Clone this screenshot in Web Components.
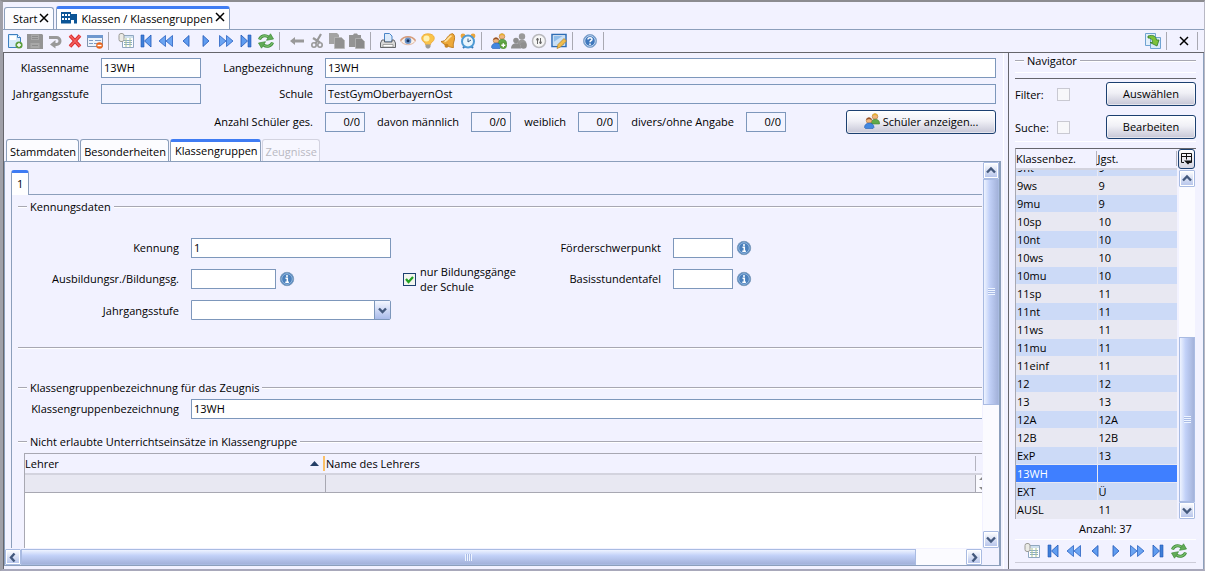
<!DOCTYPE html>
<html lang="de">
<head>
<meta charset="utf-8">
<title>Klassen / Klassengruppen</title>
<style>
html, body { height: 100%; }
body { margin: 0; font: 11px/15px "Open Sans", "Noto Sans", sans-serif; color: #000; background: #f2f2ff;
  --bg: #f2f2ff; --line: #8c9fbb; --field: #7d97bb; --blue: #3f7cf3; --dark: #66666c; }
</style>
</head>
<body>
<app-window></app-window>

<script>
const ICONS = {
  new: `<path d="M1.5 1.5h9l3 3v10h-12z" fill="#d8ebfa" stroke="#3d7fc0"/><path d="M3 3h6v4H3z" fill="#fff"/><path d="M10.5 1.5v3h3" fill="#fff" stroke="#3d7fc0"/><circle cx="12" cy="12" r="3.6" fill="#5c9e3e"/><path d="M12 10v4M10 12h4" stroke="#fff" stroke-width="1.4"/>`,
  save: `<path d="M0 1h15l1 1v14H0z" fill="#949494"/><path d="M4 1.5h8V7H4zM3.500 10h9v5h-9z" fill="#a8a8a8"/><path d="M5 3.500h6M5 5.500h6M5 12.500h6" stroke="#8c8c8c"/>`,
  undo: `<path d="M2 4.500h7.500a3.500 3.500 0 0 1 0 7H7" fill="none" stroke="#999" stroke-width="3"/><path d="M8.500 7v8.500L3 11.500z" fill="#999"/>`,
  delete: `<path d="M3 2.500l10 11M13 2.500L3 13.500" stroke="#d8262a" stroke-width="3.400"/><path d="M3 2.500l10 11M13 2.500L3 13.500" stroke="#f4605c" stroke-width="1.800"/>`,
  form: `<path d="M.5 2.500h15v11H.5z" fill="#eef4fb" stroke="#7f93ad"/><path d="M0 2h16v3H0z" fill="#6f98cf"/><path d="M2 7.500h4M8 7.500h6M2 10.500h4M7 10.500h4" stroke="#7f9cc4"/><circle cx="12.500" cy="12.500" r="3.300" fill="#e8641c"/><path d="M10.500 12.500h4" stroke="#fff" stroke-width="1.500"/>`,
  list: `<path d="M4.500 2.500h11v12h-11z" fill="#fff" stroke="#8fa7c0"/><path d="M5 3h10v2H5z" fill="#cfe0ee"/><path d="M6 7.500h8M6 9.500h8M6 11.500h8" stroke="#89abc9"/><path d="M8 5v9M12 5v9" stroke="#a9c48f"/><rect x="1" y=".5" width="5" height="8" rx="2" fill="#ebebe6" stroke="#9b9b96"/>`,
  first: `<path d="M3 2h3v12H3z" fill="#3f7fd8" stroke="#1f55b5" stroke-width=".6"/><path d="M13 2v12L6.500 8z" fill="#5f9cf0" stroke="#1f55b5" stroke-width=".8"/>`,
  rew: `<path d="M7.500 2.500v11L1 8zM14.500 2.500v11L8 8z" fill="#6ba4f2" stroke="#2a62c2" stroke-width=".8"/>`,
  prev: `<path d="M11 2.500v11L5 8z" fill="#5f9cf0" stroke="#1f55b5" stroke-width=".8"/>`,
  next: `<path d="M5 2.500v11l6-5.500z" fill="#5f9cf0" stroke="#1f55b5" stroke-width=".8"/>`,
  fwd: `<path d="M1.500 2.500v11L8 8zM8.500 2.500v11L15 8z" fill="#6ba4f2" stroke="#2a62c2" stroke-width=".8"/>`,
  last: `<path d="M10 2h3v12h-3z" fill="#3f7fd8" stroke="#1f55b5" stroke-width=".6"/><path d="M3 2v12l6.500-6z" fill="#5f9cf0" stroke="#1f55b5" stroke-width=".8"/>`,
  refresh: `<path d="M1.500 6.500C2.500 3 7 1.500 10.500 4" fill="none" stroke="#3d8c38" stroke-width="3"/><path d="M1.500 6.500C2.500 3 7 1.500 10.500 4" fill="none" stroke="#79bd6c" stroke-width="1.400"/><path d="M12.500.8L15.500 6l-7 1.300z" fill="#62ac57" stroke="#3d8c38" stroke-width=".7"/><path d="M14.500 9.500C13.500 13 9 14.500 5.500 12" fill="none" stroke="#3d8c38" stroke-width="3"/><path d="M14.500 9.500C13.500 13 9 14.500 5.500 12" fill="none" stroke="#79bd6c" stroke-width="1.400"/><path d="M3.500 15.200L.5 10l7-1.300z" fill="#62ac57" stroke="#3d8c38" stroke-width=".7"/>`,
  back: `<path d="M1 8l5-4v2.500h9v3H6V12z" fill="#999"/>`,
  cut: `<path d="M12 1L6.500 10.500M4 5l7 4.500" stroke="#999" stroke-width="2.200"/><circle cx="5" cy="12" r="2.200" fill="none" stroke="#999" stroke-width="1.600"/><circle cx="11" cy="12" r="2.200" fill="none" stroke="#999" stroke-width="1.600"/>`,
  copy: `<path d="M0 0h8l2 2v9H0z" fill="#a3a3a3"/><path d="M5.500 4.500h7l3 3v8h-10z" fill="#919191" stroke="#b8b8b8" stroke-width=".8"/>`,
  paste: `<path d="M0 2h4l1-1.500h3L9 2h3v12H0z" fill="#949494"/><path d="M6.500 5.500h6l3 3v7h-9z" fill="#8a8a8a" stroke="#b5b5b5" stroke-width=".8"/>`,
  print: `<path d="M4.500.5h5l2.500 2.500v6H4.500z" fill="#dceafa" stroke="#4a85c8"/><path d="M2 7h2.500v2H12V7h2l1.500 3v4.500H.5V10z" fill="#d9d9d9" stroke="#55585e" stroke-width=".9"/><path d="M3 11.500h10v2.500H3z" fill="#fff" stroke="#777" stroke-width=".6"/>`,
  eye: `<path d="M.5 8C4 2.500 12 2.500 15.500 8 12 13 4 13 .5 8z" fill="#f9f0ea" stroke="#dba98e" stroke-width=".8"/><path d="M.5 7.500C4 2.500 12 2.500 15.500 7.500" fill="none" stroke="#d69c7c" stroke-width="1.500"/><circle cx="8" cy="7.800" r="3.300" fill="#6a92c8"/><circle cx="8" cy="7.800" r="1.500" fill="#17325e"/>`,
  bulb: `<path d="M8 .8c7.500 0 8 6.500 3 9l-.5 2h-5l-.5-2C0 7.300.500.8 8 .8z" fill="#f9c34a" stroke="#eca732" stroke-width=".8"/><circle cx="6.500" cy="5.500" r="3" fill="#fff2b4"/><path d="M5.500 11.500h5V14L9 15.500H7L5.500 14z" fill="#9b9b98"/>`,
  bell: `<path d="M13 .8C15 2 15 6 13.500 10c-.4 1.300-.3 2.500 0 4.500C9.500 14.500 4.500 12 1 8.500 4 8.300 5 7.500 6.500 5.500 8.500 2.500 11 .3 13 .8z" fill="#eda93a" stroke="#b9761a" stroke-width=".9"/><path d="M11.500 2.800C8.500 4 7.500 8 4.500 8.800" fill="none" stroke="#ffe3a0" stroke-width="1.700"/><circle cx="6.500" cy="12.700" r="2" fill="#c98422"/>`,
  alarm: `<circle cx="3" cy="3" r="2.400" fill="#e9a43c"/><circle cx="13" cy="3" r="2.400" fill="#e9a43c"/><path d="M3 15l2-2M13 15l-2-2" stroke="#3576b4" stroke-width="2"/><circle cx="8" cy="8.500" r="6" fill="#e9f5fd" stroke="#4f9ad4" stroke-width="2"/><path d="M8 5.500v3.500l3-2" fill="none" stroke="#355c84"/>`,
  users: `<circle cx="11" cy="3.500" r="2.800" fill="#f0b57b" stroke="#ad7135" stroke-width=".6"/><path d="M8.200 3C8.500-.5 13.500-.5 13.800 3L11 2z" fill="#e4b02c"/><path d="M7 10c0-5 8.500-5 8.500 0v1H7z" fill="#60aa4a" stroke="#3f7f31" stroke-width=".6"/><circle cx="5" cy="7.500" r="2.800" fill="#f0b57b" stroke="#ad7135" stroke-width=".6"/><path d="M2.200 7C2.500 3.500 7.500 3.500 7.800 7L5 6z" fill="#94502a"/><path d="M.5 14.500c0-6 9.500-6 9.500 0l-1 1H1.500z" fill="#4388e0" stroke="#245eb0" stroke-width=".6"/>`,
  usersoff: `<circle cx="11" cy="3.500" r="3.200" fill="#999"/><path d="M6.500 11c0-6 9-6 9 0v1h-9z" fill="#999"/><circle cx="5" cy="7.500" r="2.800" fill="#8f8f8f"/><path d="M0 15.500c0-7 10-7 10 0z" fill="#8f8f8f"/><circle cx="12.500" cy="12.500" r="3.300" fill="#8f8f8f"/>`,
  toggle: `<circle cx="8" cy="8" r="6.500" fill="#f6f6f6" stroke="#b9b9bd" stroke-width="1.500"/><path d="M6.500 5v6M9.500 5v6" stroke="#666"/><circle cx="6.500" cy="6.500" r="1.200" fill="#666"/><circle cx="9.500" cy="9.500" r="1.200" fill="#666"/>`,
  edit: `<path d="M1 1.500h14v12H1z" fill="#fff" stroke="#2d6cb5" stroke-width="1.500"/><path d="M2.500 3h11v9h-11z" fill="#8fbdea"/><path d="M2.500 9l9-6h2v5l-5 4h-6z" fill="#c9e0f5"/><path d="M6 15.500l1-4L13 5.500l2.500 2.500L9.500 14z" fill="#f1bd4c" stroke="#b17f22" stroke-width=".7"/>`,
  help: `<circle cx="8" cy="8" r="6.500" fill="#3f78bd" stroke="#8ba9cd"/><circle cx="8" cy="8" r="5.300" fill="none" stroke="#dbe8f7" stroke-width=".9"/><path d="M6 6.500C6 4 10.200 4.200 10 6.500c-.1 1.200-2 1.300-2 2.700M8 10.500V12" fill="none" stroke="#fff" stroke-width="1.500"/>`,
  info: `<circle cx="8" cy="8" r="6.700" fill="#4a80bc" stroke="#7f9dbd"/><circle cx="8" cy="8" r="5.300" fill="none" stroke="#a9c6e4" stroke-width=".8"/><path d="M8 4v2M6.500 7.300H8.300V11M6.300 11.300h3.600" fill="none" stroke="#fff" stroke-width="1.500"/>`,
  export: `<path d="M.5 .5h10v12H.5z" fill="#e3effa" stroke="#6fa3d2"/><path d="M5.500 4.500h10v11h-10z" fill="#d7e8f8" stroke="#6fa3d2"/><path d="M3 3c5-1.500 8 0 8.500 4H14l-2 6-7-3.500h2.500C7.500 6 6 5 3 5z" fill="#7cc13a" stroke="#2f7a2a" stroke-width=".8"/>`,
  close: `<path d="M4 4l8 8M12 4l-8 8" stroke="#000" stroke-width="1.500"/>`,
  school: `<path d="M0 2h10v2h6v9.500h-3V10h-3v3.500H0z" fill="#0c5596"/><path d="M1 4h2v2H1zM4 4h2v2H4zM7 4h2v2H7zM1 8h2v2H1zM4 8h2v2H4zM7 8h2v2H7z" fill="#fff"/>`,
  columns: `<path d="M2.500 2.500h10v9h-4M2.500 2.500v9H5M2.500 5.500h10M7.500 2.500v6" fill="none" stroke="#111"/><path d="M5 9.500h8l-4 4z" fill="#111"/>`
};
ICONS.usersadd = ICONS.users + `<circle cx="12.300" cy="12.300" r="3.600" fill="#5c9e3e"/><path d="M12.300 10.300v4M10.300 12.300h4" stroke="#fff" stroke-width="1.400"/>`;

class UiElement extends HTMLElement {
  connectedCallback() {
    if (this.shadowRoot) return;
    this.attachShadow({ mode: 'open' }).innerHTML =
      `<style>*,:host{box-sizing:border-box}:host{display:block}:host,button,input,select{font:inherit}${this.styles()}</style>${this.markup()}`;
  }
  attr(name, fallback = '') { return this.getAttribute(name) ?? fallback; }
  styles() { return ''; }
  markup() { return '<slot></slot>'; }
}
const define = (name, cls) => customElements.define(name, cls);

define('ui-icon', class extends UiElement {
  styles() { return ':host{display:block;width:16px;height:16px;flex:none}svg{display:block;width:100%;height:100%}'; }
  markup() { return `<svg viewBox="0 0 16 16" aria-hidden="true">${ICONS[this.attr('name')]}</svg>`; }
});

define('tool-button', class extends UiElement {
  styles() { return 'button{display:flex;align-items:center;justify-content:center;width:20px;height:20px;padding:0;border:0;background:none}'; }
  markup() { return `<button type="button" aria-label="${this.attr('label')}"><ui-icon name="${this.attr('icon')}"></ui-icon></button>`; }
});

define('tool-divider', class extends UiElement {
  styles() { return ':host{width:1px;height:18px;margin:0 7px 0 3px;background:#a9a9b2;flex:none}'; }
  markup() { return ''; }
});

const btn = (icon, label) => `<tool-button icon="${icon}" label="${label}"></tool-button>`;
const DIV = '<tool-divider></tool-divider>';
const NAV = [['list', 'Liste'], ['first', 'Erster'], ['rew', 'Seite zurück'], ['prev', 'Zurück'], ['next', 'Weiter'], ['fwd', 'Seite vor'], ['last', 'Letzter'], ['refresh', 'Aktualisieren']];

define('tool-bar', class extends UiElement {
  styles() { return ':host{display:flex;align-items:center;height:24px;padding-left:2px;border-top:1px solid var(--line);border-bottom:1px solid var(--dark)}.end{margin-left:auto;display:flex;align-items:center}.end tool-divider:last-child{margin-right:6px}'; }
  markup() {
    return [
      btn('new', 'Neu') + btn('save', 'Speichern') + btn('undo', 'Rückgängig') + btn('delete', 'Löschen') + btn('form', 'Maske leeren'),
      NAV.map(n => btn(...n)).join(''),
      btn('back', 'Zurück') + btn('cut', 'Ausschneiden') + btn('copy', 'Kopieren') + btn('paste', 'Einfügen'),
      btn('print', 'Drucken') + btn('eye', 'Vorschau') + btn('bulb', 'Hinweise') + btn('bell', 'Erinnerung') + btn('alarm', 'Wiedervorlage'),
      btn('usersadd', 'Schüler hinzufügen') + btn('usersoff', 'Schüler entfernen') + btn('toggle', 'Umschalten') + btn('edit', 'Bearbeiten'),
      btn('help', 'Hilfe'), ''
    ].join(DIV) + `<div class="end">${btn('export', 'Export')}${DIV}${btn('close', 'Schließen')}${DIV}</div>`;
  }
});

define('doc-tab', class extends UiElement {
  styles() { return `
    :host{display:flex;align-items:center;height:22px;padding:0 2px 0 8px;background:#fcfcff;border:1px solid var(--line);border-bottom:0;border-radius:3px 3px 0 0}
    :host([active]){height:24px;margin-bottom:-1px;padding-left:4px;padding-bottom:3px;border-top:3px solid var(--blue);background:#fff}
    button{padding:0;border:0;background:none;display:flex;align-items:center;gap:4px;line-height:15px}
    .x{width:14px;padding-bottom:2px}.x ui-icon{margin:0 -1px}`; }
  markup() { return `<button type="button" role="tab">${this.hasAttribute('icon') ? `<ui-icon name="${this.attr('icon')}"></ui-icon>` : ''}<slot></slot></button><button type="button" class="x" aria-label="Schließen"><ui-icon name="close"></ui-icon></button>`; }
});

define('page-tab', class extends UiElement {
  styles() { return `
    button{display:block;height:22px;padding:1px 2px 0 3px;border:1px solid var(--line);border-bottom:0;border-radius:3px 3px 0 0;background:#fcfcff;color:#000}
    :host([active]) button{height:23px;padding:0 2px 3px 4px;border-top:3px solid var(--blue);background:#fff}
    :host([active]){margin-bottom:-1px}
    :host([disabled]) button{border-color:#d3d3e0;color:#b9b9c2;background:#f7f7ff}
    :host([tall]) button{height:25px;padding:0 5px 2px}`; }
  markup() { return `<button type="button" role="tab"${this.hasAttribute('disabled') ? ' disabled' : ''}><slot></slot></button>`; }
});

define('text-field', class extends UiElement {
  styles() { return `
    :host{display:flex;align-items:center;gap:12px;height:20px}
    label{width:var(--label,84px);padding-bottom:2px;text-align:right;white-space:nowrap;flex:none}
    input{width:var(--input,auto);flex:none;min-width:0;height:20px;padding:0 2px 1px;border:1px solid var(--field);background:#fff;color:#000}
    :host([wide]) input{flex:1 1 0;width:0}
    :host([readonly]) input{background:#f3f4ff}
    :host([count]) input{text-align:right;padding-right:4px}
    ui-icon{margin-left:-9px}`; }
  markup() { return `<label for="f">${this.attr('label')}</label><input id="f" type="text" value="${this.attr('value')}"${this.hasAttribute('readonly') ? ' readonly' : ''}>${this.hasAttribute('info') ? '<ui-icon name="info"></ui-icon>' : ''}`; }
});

define('drop-down', class extends UiElement {
  styles() { return `
    :host{display:flex;align-items:center;gap:12px;height:20px}
    label{width:var(--label);text-align:right;flex:none}
    .box{position:relative;width:200px}
    select{display:block;width:100%;height:20px;appearance:none;border:1px solid var(--field);border-radius:0 2px 2px 0;background:#fff;padding:0 18px 0 2px}
    svg{position:absolute;right:1px;top:1px;width:16px;height:18px;border-left:1px solid var(--field);background:linear-gradient(#f4f7ff,#a9bbea);pointer-events:none}`; }
  markup() { return `<label for="s">${this.attr('label')}</label><div class="box"><select id="s"><option></option></select><svg viewBox="0 0 14 18" aria-hidden="true"><path d="M3.500 7.500L7 11l3.500-3.500" fill="none" stroke="#44597d" stroke-width="2.400"/></svg></div>`; }
});

define('check-box', class extends UiElement {
  styles() { return `
    label{display:flex;align-items:center;gap:4px;line-height:15px}
    :host([before]) label{justify-content:space-between;width:55px;gap:0}
    input{appearance:none;width:13px;height:13px;margin:0;border:1px solid #c9c9d2;background:#f7f7fa;flex:none}
    :host([checked]) input{border-color:#1c4070;background:#f2f5ee url("data:image/svg+xml,%3Csvg xmlns='http://www.w3.org/2000/svg' viewBox='0 0 11 11'%3E%3Cpath d='M2 5l2.500 3L9 3' fill='none' stroke='%2321a121' stroke-width='2.200'/%3E%3C/svg%3E")}`; }
  markup() {
    const box = `<input type="checkbox"${this.hasAttribute('checked') ? ' checked' : ''}>`;
    return this.hasAttribute('before') ? `<label><slot></slot>${box}</label>` : `<label>${box}<span><slot></slot></span></label>`;
  }
});

define('push-button', class extends UiElement {
  styles() { return 'button{display:flex;align-items:center;justify-content:center;gap:3px;width:100%;height:24px;padding:0 0 2px;border:1px solid #1c4070;border-radius:3px;background:linear-gradient(#fff,#f0f0f6 45%,#c6c6d6);color:#000;box-shadow:inset 0 0 0 1px #fff8}'; }
  markup() { return `<button type="button">${this.hasAttribute('icon') ? `<ui-icon name="${this.attr('icon')}"></ui-icon>` : ''}<slot></slot></button>`; }
});

define('group-title', class extends UiElement {
  styles() { return `
    :host{display:flex;align-items:center;gap:3px;height:16px}
    h2{margin:0;padding-bottom:2px;font:inherit;white-space:nowrap}
    i{height:2px;width:9px;border-top:1px solid #a8a8b2;border-bottom:1px solid #fff;flex:none}
    i:last-child{flex:1}`; }
  markup() { return '<i></i><h2><slot></slot></h2><i></i>'; }
});

define('scroll-bar', class extends UiElement {
  styles() { return `
    :host{display:flex;flex-direction:column;width:16px;background:#fbfbff}
    :host([horizontal]){flex-direction:row;width:auto;height:16px}
    button{display:block;width:16px;height:17px;padding:0;flex:none;border:1px solid #a9bbe2;border-radius:1px;background:linear-gradient(#fff,#b3c2ea);box-shadow:inset 0 0 0 1px #fff}
    :host([horizontal]) button{height:16px}
    svg{display:block;width:14px;height:15px}
    .track{flex:1;display:flex;flex-direction:column;min-height:0}
    :host([horizontal]) .track{flex-direction:row}
    .before{flex:var(--before) 0 0}.after{flex:var(--after) 0 0}
    .thumb{flex:var(--size) 0 0;display:flex;align-items:center;justify-content:center;border:1px solid #a9bbe2;background:linear-gradient(90deg,#eef3ff,#c2d1f8 40%,#a3b2da)}
    :host([horizontal]) .thumb{background:linear-gradient(#eef3ff,#c2d1f8 40%,#a3b2da)}
    .grip{width:7px;height:7px;background:repeating-linear-gradient(#eef4ff 0 1px,#a9bbe6 1px 2px)}
    :host([horizontal]) .grip{background:repeating-linear-gradient(90deg,#eef4ff 0 1px,#a9bbe6 1px 2px)}`; }
  markup() {
    const arrow = (d, l) => `<button type="button" aria-label="${l}"><svg viewBox="0 0 14 15"><path d="${d}" fill="none" stroke="#44597d" stroke-width="2.400"/></svg></button>`;
    const h = this.hasAttribute('horizontal');
    return (h ? arrow('M8.500 3.500L5 7.500l3.500 4', 'Links') : arrow('M3 9.500L7 5.500l4 4', 'Auf')) +
      '<div class="track"><div class="before"></div><div class="thumb"><div class="grip"></div></div><div class="after"></div></div>' +
      (h ? arrow('M5.500 3.500L9 7.500l-3.500 4', 'Rechts') : arrow('M3 5.500L7 9.500l4-4', 'Ab'));
  }
});

define('teacher-table', class extends UiElement {
  styles() { return `
    :host{overflow:hidden;background:#fff;border-left:1px solid #a8a8b2;border-top:1px solid #a8a8b2}
    table{border-collapse:separate;border-spacing:0;table-layout:fixed;width:calc(100% + 12px)}
    th{height:21px;padding:0;font-weight:normal;text-align:left;background:var(--bg);border-bottom:2px solid #d3d3de}
    th div{display:flex;align-items:center;height:15px;border-right:1px solid #b4b4c0}
    th:first-child div{border-right:2px solid #fbc066;margin-right:1px}
    th:last-child div{border:0}
    th svg{width:9px;height:5px;margin:0 4px 0 auto}
    td{height:18px;padding:0;background:#e8e8f2;border-right:1px solid #a8a8b2;border-bottom:1px solid #a8a8b2}
    td:last-child{background:#fafaff}td svg{display:block;width:16px;height:17px}
    col.a{width:301px}col.c{width:18px}`; }
  markup() { return `<table><colgroup><col class="a"><col><col class="c"></colgroup><thead><tr><th><div>Lehrer<svg viewBox="0 0 9 5"><path d="M0 5l4.500-5L9 5z" fill="#253f66"/></svg></div></th><th><div>Name des Lehrers</div></th><th><div></div></th></tr></thead><tbody><tr><td></td><td></td><td><svg viewBox="0 0 16 17"><path d="M3 5l3-3 3 3zM3 12l3 3 3-3z" fill="#888"/></svg></td></tr></tbody></table>`; }
});

define('class-header', class extends UiElement {
  styles() { return `
    :host{padding:5px 7px 0 1px}
    .row{display:flex;height:26px;align-items:flex-start}
    .long{flex:1;--label:112px}
    .name{--label:84px;--input:100px}
    .counts{height:24px;--input:40px;align-items:center}
    .counts text-field{flex:none}
    .total{--label:308px}.male{--label:94px}.female{--label:55px}.other{--label:116px}
    push-button{width:150px;margin-left:auto}`; }
  markup() { return `
    <div class="row"><text-field class="name" label="Klassenname" value="13WH"></text-field><text-field class="long" wide label="Langbezeichnung" value="13WH"></text-field></div>
    <div class="row"><text-field class="name" readonly label="Jahrgangsstufe"></text-field><text-field class="long" wide readonly label="Schule" value="TestGymOberbayernOst"></text-field></div>
    <div class="row counts"><text-field class="total" readonly count label="Anzahl Schüler ges." value="0/0"></text-field><text-field class="male" readonly count label="davon männlich" value="0/0"></text-field><text-field class="female" readonly count label="weiblich" value="0/0"></text-field><text-field class="other" readonly count label="divers/ohne Angabe" value="0/0"></text-field><push-button icon="users">Schüler anzeigen...</push-button></div>`; }
});

define('group-form', class extends UiElement {
  styles() { return `
    :host{display:flex;flex-direction:column;min-height:0;overflow:hidden;padding:7px 0 0 6px}
    .tabs{display:flex;align-items:flex-end;height:26px;border-bottom:1px solid var(--line);flex:none}
    .body{flex:1;min-height:0;display:flex;flex-direction:column;border-left:1px solid var(--line);padding-top:4px}
    group-title{margin-left:6px;flex:none}
    .grid{display:grid;grid-template-columns:379px 134px auto;grid-auto-rows:20px;gap:11px 12px;padding:23px 0 27px;align-items:center;justify-content:start;--label:167px}
    .long{--input:200px}.short{--input:85px}.code{--label:112px;--input:60px}
    hr{margin:0 0 31px 6px;border:0;height:2px;border-top:1px solid #a8a8b2;border-bottom:1px solid #fff;flex:none}
    .wide{--label:167px;margin:3px -12px 15px 0;flex:none}
    teacher-table{flex:1;margin:3px 0 0 12px}`; }
  markup() { return `
    <div class="tabs" role="tablist"><page-tab active tall>1</page-tab></div>
    <div class="body">
      <group-title>Kennungsdaten</group-title>
      <div class="grid">
        <text-field class="long" label="Kennung" value="1"></text-field><span></span><text-field class="code" info label="Förderschwerpunkt"></text-field>
        <text-field class="short" info label="Ausbildungsr./Bildungsg."></text-field><check-box checked>nur Bildungsgänge<br>der Schule</check-box><text-field class="code" info label="Basisstundentafel"></text-field>
        <drop-down label="Jahrgangsstufe"></drop-down>
      </div>
      <hr>
      <group-title>Klassengruppenbezeichnung für das Zeugnis</group-title>
      <text-field class="wide" wide label="Klassengruppenbezeichnung" value="13WH"></text-field>
      <group-title>Nicht erlaubte Unterrichtseinsätze in Klassengruppe</group-title>
      <teacher-table></teacher-table>
    </div>`; }
});

define('class-editor', class extends UiElement {
  styles() { return `
    :host{display:flex;flex-direction:column;flex:1;min-width:0;border-left:1px solid var(--dark);border-right:1px solid #fff}
    .tabs{display:flex;align-items:flex-end;gap:1px;height:24px;margin:3px 0 0 2px;flex:none}
    .pane{flex:1;min-height:0;display:grid;grid-template:minmax(0,1fr) 17px / minmax(0,1fr) 17px;margin:0 2px 3px 0;border:1px solid var(--line);border-right-width:2px}
    .v{--before:0;--size:225;--after:127;margin-left:1px}
    .h{--before:0;--size:894;--after:50;margin-top:1px}
    .tabs page-tab{flex:none}`; }
  markup() { return `
    <class-header></class-header>
    <div class="tabs" role="tablist"><page-tab>Stammdaten</page-tab><page-tab>Besonderheiten</page-tab><page-tab active>Klassengruppen</page-tab><page-tab disabled>Zeugnisse</page-tab></div>
    <div class="pane"><group-form></group-form><scroll-bar class="v"></scroll-bar><scroll-bar class="h" horizontal></scroll-bar></div>`; }
});

const CLASSES = [['9nt', '9'], ['9ws', '9'], ['9mu', '9'], ['10sp', '10'], ['10nt', '10'], ['10ws', '10'], ['10mu', '10'], ['11sp', '11'], ['11nt', '11'], ['11ws', '11'], ['11mu', '11'], ['11einf', '11'], ['12', '12'], ['13', '13'], ['12A', '12A'], ['12B', '12B'], ['ExP', '13'], ['13WH', ''], ['EXT', 'Ü'], ['AUSL', '11']];

define('class-list', class extends UiElement {
  styles() { return `
    :host{display:grid;grid-template:21px minmax(0,1fr) / minmax(0,1fr) 19px;border-top:1px solid var(--dark);border-left:1px solid #a8a8b2}
    .head{border-bottom:2px solid #d3d3de;display:grid;grid-template-columns:1fr 1fr;align-items:center}
    .head span{border-right:1px solid #b4b4c0;height:15px}
    .head span + span{padding-left:1px}
    .rows{overflow:hidden;display:flex;flex-direction:column;justify-content:flex-end}
    table{border-collapse:separate;border-spacing:0;table-layout:fixed;width:100%;flex:none}
    td{height:18px;padding:0 1px;line-height:17px;border-bottom:1px solid #e8e8f2}
    td + td{border-left:1px solid #e8e8f2}
    tr{background:#e8e8f2}tr:nth-child(odd){background:#ccdaf7}
    tr[aria-selected=true]{background:#3f7fff;color:#fff}
    .pick{margin:0 0 0 1px;padding:0;width:17px;height:20px;border:1px solid #1c4070;border-radius:3px;background:linear-gradient(#fff,#d5d5e2);display:flex;align-items:center;justify-content:center}
    scroll-bar{margin-left:2px;--before:151;--size:164;--after:0}`; }
  markup() { return `
    <div class="head"><span>Klassenbez.</span><span>Jgst.</span></div>
    <button type="button" class="pick" aria-label="Spalten wählen"><ui-icon name="columns"></ui-icon></button>
    <div class="rows"><table><tbody>${CLASSES.map(([a, b]) => `<tr aria-selected="${a === '13WH'}"><td>${a}</td><td>${b}</td></tr>`).join('')}</tbody></table></div>
    <scroll-bar></scroll-bar>`; }
});

define('nav-panel', class extends UiElement {
  styles() { return `
    :host{display:flex;flex-direction:column;width:195px;flex:none;margin-left:4px;padding:0 7px 0 6px;border-left:1px solid var(--dark)}
    .filter{margin-top:3px;border-top:1px solid #fff}
    .filter>div{margin-top:5px;border-top:1px solid var(--dark);border-bottom:1px solid #fff;display:grid;gap:9px;padding:3px 0 2px}
    .line{display:flex;align-items:center;justify-content:space-between}
    push-button{width:90px}
    class-list{flex:1;min-height:0;margin-top:6px}
    .count{text-align:center;padding:2px 0 3px}
    .tools{display:flex;justify-content:center;height:24px;align-items:center;border-top:1px solid #fff;border-bottom:1px solid #ccccd8;gap:1px;margin-bottom:6px}`; }
  markup() { return `
    <group-title>Navigator</group-title>
    <div class="filter"><div><div class="line"><check-box before>Filter:</check-box><push-button>Auswählen</push-button></div><div class="line"><check-box before>Suche:</check-box><push-button>Bearbeiten</push-button></div></div></div>
    <class-list></class-list>
    <div class="count">Anzahl: 37</div>
    <div class="tools">${NAV.map(n => btn(...n)).join('')}</div>`; }
});

define('app-window', class extends UiElement {
  styles() { return `
    :host{display:flex;flex-direction:column;height:100vh;min-height:480px;border:2px solid #a0a0a4;border-top-color:#8c8c90;border-right:1px solid #b8b8c4;border-left:3px solid #a0a0a8;border-bottom:2px solid #a8a8ba;background:var(--bg)}
    .tabs{display:flex;align-items:flex-end;gap:2px;height:27px;padding-left:1px;flex:none}
    main{display:flex;flex:1;min-height:0;border-right:1px solid var(--line)}
    doc-tab,tool-bar{flex:none}`; }
  markup() { return `
    <div class="tabs" role="tablist"><doc-tab>Start</doc-tab><doc-tab active icon="school">Klassen / Klassengruppen</doc-tab></div>
    <tool-bar></tool-bar>
    <main><class-editor></class-editor><nav-panel></nav-panel></main>`; }
});
</script>
</body>
</html>
